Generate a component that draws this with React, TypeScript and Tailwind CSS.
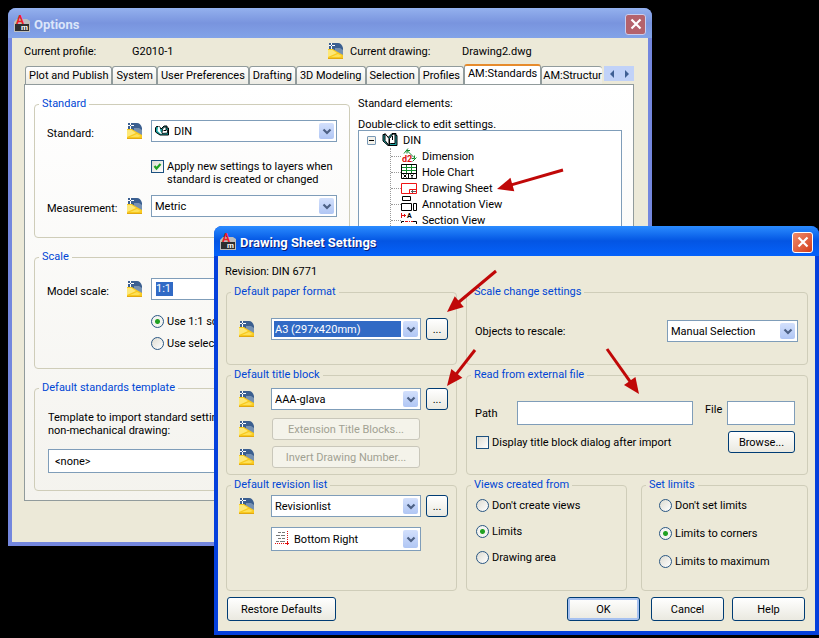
import { useId, useState } from 'react';
import type { ReactNode } from 'react';
import clsx from 'clsx';

const TABS = ['Plot and Publish', 'System', 'User Preferences', 'Drafting', '3D Modeling', 'Selection', 'Profiles', 'AM:Standards', 'AM:Structur'];

/* ---------- icons ---------- */

function DrawingIcon({ className = '' }: { className?: string }) {
  return (
    <svg viewBox="0 0 16 16" className={clsx('size-4 shrink-0', className)} aria-hidden="true">
      <path d="M1 0h9q3.500 0 5 5v8H1z" fill="#3b5f90" />
      <path d="M7 5h5l3 2v6L7 9z" fill="#7691b2" />
      <path d="M0 6h5l3 2 7 4v4H0z" fill="#f8c91e" />
      <path d="M0 7h4.500l4.500 3-9 4z" fill="#fde878" />
      <path d="M3 14l7-3 4 2-3 1z" fill="#fde05a" />
      <path d="M0 15h15v1H0z" fill="#e2a812" />
      <path d="M3.500 0v6M1 2.500h6" stroke="#fff" />
      <path d="M3 2h1v1H3z" fill="#3b5f90" />
    </svg>
  );
}

function AppIcon() {
  return (
    <svg viewBox="0 0 16 16" className="size-4 shrink-0 overflow-visible" aria-hidden="true">
      <path d="M0 6l3-3h10l3 2v11H0z" fill="#bdbdbd" />
      <path d="M1 8h14v7H1z" fill="#2e2e2e" />
      <text x="2" y="8" fontSize="12" fontWeight="700" fill="#ee1c24">A</text>
      <text x="7" y="14" fontSize="8" fontWeight="700" fill="#fff">m</text>
    </svg>
  );
}

function BookIcon() {
  return (
    <svg viewBox="0 0 16 16" className="size-4 shrink-0" aria-hidden="true">
      <path d="M1 2.500h2l3 3 4-4h4v2h1v10H6L1 9z" fill="#1aa0a0" stroke="#000" />
      <path d="M3 1.500l4 5v7L3 8.500z" fill="#fff" stroke="#000" />
      <path d="M7.500 12.500v-6L11 2h2v9.500H8.500z" fill="#fff" stroke="#000" />
      <path d="M10.500 4v4" fill="none" stroke="#000" />
    </svg>
  );
}

function OpenBookIcon() {
  return (
    <svg viewBox="0 0 16 12" className="h-3 w-4 shrink-0" aria-hidden="true">
      <path d="M1.500 1.500h3L6 4l3-3h3v2h1.500v7H5L.5 7V3z" fill="#16a3a3" stroke="#000" />
      <path d="M3 1.500h1.500l1 5 2 2.500H6L2.500 6z" fill="#fff" />
      <path d="M7 8.500L7.500 4l2-2h1.500v3h1.500v3z" fill="#fff" stroke="#000" strokeWidth=".8" />
      <path d="M8.500 5.500h2.500" stroke="#000" />
    </svg>
  );
}

function DimensionIcon() {
  return (
    <svg viewBox="0 0 16 16" className="size-4 shrink-0" aria-hidden="true">
      <path d="M6 2.500l7 7M6 2.500h3M6 2.500v3M13.500 10.500v-3M13.500 10.500h-3M3 5.500l4-5M11.500 13.500l4-4" fill="none" stroke="#128a2c" />
      <text x="1" y="14" fontSize="9" fontWeight="700" fill="#e01010">d2</text>
    </svg>
  );
}

function HoleChartIcon() {
  return (
    <svg viewBox="0 0 16 16" className="size-4 shrink-0" aria-hidden="true">
      <path d="M.5.5h15v14H.5z" fill="#fff" />
      <path d="M1 3.500h14M1 6.500h14M5.500 1v8M10.500 1v8" stroke="#128a2c" />
      <path d="M.5.5h15v14H.5zM1 9.500h14M7.500 9v6" fill="none" stroke="#000" />
      <path d="M2.500 10.500l3 3M5.500 10.500l-3 3M9.500 10.500l1.500 1.500 1.500-1.500M11 12v2" fill="none" stroke="#000" />
    </svg>
  );
}

function SheetIcon() {
  return (
    <svg viewBox="0 0 16 16" className="size-4 shrink-0" aria-hidden="true">
      <path d="M.5 3.500h15v10H.5z" fill="#fff" stroke="#f01414" />
      <path d="M8.500 13.500v-4h7" fill="none" stroke="#f01414" />
      <path d="M10 11.500h5M11.500 10v3" stroke="#5b5b5b" />
    </svg>
  );
}

function AnnotationIcon() {
  return (
    <svg viewBox="0 0 16 16" className="size-4 shrink-0" aria-hidden="true">
      <path d="M1.500.5h8v4h-8zM.5 7.500h10v7H.5zM12.500 7.500h3v7h-3z" fill="#fff" stroke="#000" />
    </svg>
  );
}

function SectionIcon() {
  return (
    <svg viewBox="0 0 16 16" className="size-4 shrink-0" aria-hidden="true">
      <path d="M.5 1v5M1 3.500h4M3.500 2v3M4 9.500h3M8 9.500h1M10 9.500h3" stroke="#e01010" fill="none" />
      <path d="M.5 11V9.500H3M12 9.500h3.500V12" fill="none" stroke="#000" />
      <text x="6" y="6" fontSize="7" fontWeight="700">A</text>
    </svg>
  );
}

function AlignIcon() {
  return (
    <svg viewBox="0 0 16 16" className="size-4 shrink-0" aria-hidden="true">
      <path d="M3 1.500h3M7 1.500h3M1 4.500h4M6 4.500h4M3 7.500h3M7 7.500h3M1 10.500h3M5 10.500h5" stroke="#777" />
      <path d="M12.500 0v12M0 12.500h12" stroke="#e01010" strokeDasharray="1 1" />
      <path d="M12.500 11v3M11 12.500h3" stroke="#e01010" />
    </svg>
  );
}

function Chevron() {
  return (
    <svg viewBox="0 0 10 7" className="w-[10px]" aria-hidden="true">
      <path d="M1.500 1.500L5 5l3.500-3.500" fill="none" stroke="#4d6185" strokeWidth="2.200" />
    </svg>
  );
}

/* ---------- controls ---------- */

type SelectProps = { label: string; value: string; icon?: ReactNode; highlight?: boolean; tall?: boolean; id?: string };

function SelectBox({ label, value, icon, highlight, tall, id }: SelectProps) {
  return (
    <div className={clsx('flex min-w-0 items-stretch gap-[2px] border border-[#7f9db9] bg-white p-[2px]', tall ? 'h-6' : 'h-[22px]')}>
      {icon && <span className="flex items-center pl-px">{icon}</span>}
      <select
        id={id}
        aria-label={label}
        className={clsx('min-w-0 flex-1 appearance-none pl-px outline-none', highlight ? 'bg-[#316ac5] text-white' : 'bg-white')}
      >
        <option>{value}</option>
      </select>
      <span className="flex w-[15px] items-center justify-center rounded-xs bg-linear-to-b from-[#d3e0fc] to-[#b0c6f4]">
        <Chevron />
      </span>
    </div>
  );
}

function XpButton({ children, className, disabled, primary }: { children: ReactNode; className?: string; disabled?: boolean; primary?: boolean }) {
  return (
    <button
      type="button"
      disabled={disabled}
      className={clsx(
        'rounded-[3px] border text-center whitespace-nowrap',
        disabled
          ? 'border-[#c9c7ba] bg-[#f4f3ea] text-[#a1a192]'
          : 'border-[#003c74] bg-linear-to-b from-white to-[#eae9e0]',
        primary && 'inset-ring-2 inset-ring-[#a6c1f0]',
        className
      )}
    >
      {children}
    </button>
  );
}

function Radio({ name, label, checked }: { name: string; label: string; checked?: boolean }) {
  return (
    <label className="flex items-center gap-[3px] whitespace-nowrap">
      <input
        type="radio"
        name={name}
        defaultChecked={checked}
        className="size-[13px] shrink-0 appearance-none rounded-full border border-[#2a5783] bg-linear-to-br from-[#dedcd2] to-white checked:bg-[radial-gradient(circle,#21a121_0_2px,#f4f4f0_3px)]"
      />
      {label}
    </label>
  );
}

function CheckBox({ label, checked }: { label: ReactNode; checked?: boolean }) {
  return (
    <label className="flex items-start gap-[3px]">
      <span className="relative size-[13px] shrink-0">
        <input
          type="checkbox"
          defaultChecked={checked}
          className="peer block size-[13px] appearance-none border border-[#1c5180] bg-linear-to-br from-[#dedcd2] to-white"
        />
        <svg viewBox="0 0 13 13" className="pointer-events-none absolute inset-0 hidden peer-checked:block" aria-hidden="true">
          <path d="M3.500 6l2 2.500 4-4.500" fill="none" stroke="#21a121" strokeWidth="2.200" />
        </svg>
      </span>
      <span>{label}</span>
    </label>
  );
}

function Group({ title, className, children }: { title: string; className?: string; children: ReactNode }) {
  return (
    <fieldset className="min-w-0 rounded-[4px] border border-[#cfcdb9]">
      <legend className="ml-1 px-[3px] leading-[14px] text-[#0046d5]">{title}</legend>
      <div className={className}>{children}</div>
    </fieldset>
  );
}

function CloseButton({ faded }: { faded?: boolean }) {
  return (
    <button
      type="button"
      aria-label="Close"
      className={clsx(
        'flex size-[21px] items-center justify-center rounded-[3px] border',
        faded ? 'border-[#c9cdee] bg-[#b4626c]' : 'border-white bg-linear-to-br from-[#ee8a6a] to-[#d33a12]'
      )}
    >
      <svg viewBox="0 0 12 12" className="size-3" aria-hidden="true">
        <path d="M1.500 1.500l9 9M10.500 1.500l-9 9" stroke="#fff" strokeWidth="2.200" />
      </svg>
    </button>
  );
}

/* red pointer running from the tail to the tip, both in local pixels */
function Arrow({ className, tail, tip }: { className: string; tail: [number, number]; tip: [number, number] }) {
  const dx = tip[0] - tail[0];
  const dy = tip[1] - tail[1];
  const len = Math.hypot(dx, dy);
  const angle = (Math.atan2(dy, dx) * 180) / Math.PI;
  return (
    <svg className={clsx('pointer-events-none absolute overflow-visible', className)} aria-hidden="true">
      <g transform={`translate(${tail[0]} ${tail[1]}) rotate(${angle})`} fill="#c00808">
        <path d={`M0-1.500H${len - 14}V1.500H0z`} />
        <path d={`M${len} 0l-16-7v14z`} />
      </g>
    </svg>
  );
}

/* ---------- options window ---------- */

const ELEMENTS = [
  { name: 'Dimension', icon: <DimensionIcon /> },
  { name: 'Hole Chart', icon: <HoleChartIcon /> },
  { name: 'Drawing Sheet', icon: <SheetIcon /> },
  { name: 'Annotation View', icon: <AnnotationIcon /> },
  { name: 'Section View', icon: <SectionIcon /> },
];

function TabStrip() {
  const [active, setActive] = useState('AM:Standards');
  return (
    <div className="flex h-5 items-end">
      <div className="flex min-w-0 flex-1 items-end overflow-hidden pl-px" role="tablist">
        {TABS.map((tab) => (
          <button
            key={tab}
            type="button"
            role="tab"
            aria-selected={tab === active}
            onClick={() => setActive(tab)}
            className={clsx(
              'shrink-0 rounded-t-[3px] border border-b-0 border-[#919b9c] whitespace-nowrap last:border-r-0 last:pr-0 last:pl-px',
              tab === active
                ? 'h-5 border-t-2 border-t-[#e68b2c] bg-white px-[3px] pb-[3px]'
                : 'h-[18px] bg-linear-to-b from-white to-[#ecebe4] px-[3px]'
            )}
          >
            {tab}
          </button>
        ))}
      </div>
      <div className="mb-[3px] flex h-[15px] bg-[#c1d2f8]">
        <button type="button" aria-label="Scroll tabs left" className="flex w-[15px] items-center justify-center">
          <svg viewBox="0 0 6 8" className="h-2"><path d="M5 0v8L1 4z" fill="#3f5f93" /></svg>
        </button>
        <button type="button" aria-label="Scroll tabs right" className="flex w-[15px] items-center justify-center">
          <svg viewBox="0 0 6 8" className="h-2"><path d="M1 0v8l4-4z" fill="#3f5f93" /></svg>
        </button>
      </div>
    </div>
  );
}

function OptionsWindow() {
  const id = useId();
  return (
    <section className="absolute top-2 right-[167px] left-2 rounded-t-lg bg-[#7487de] px-1 pb-1">
      <header className="-mx-1 flex h-[30px] items-center gap-1 rounded-t-lg bg-linear-to-b from-[#94b1ee] via-[#7994de] to-[#82a3e8] px-[6px] pt-[2px]">
        <AppIcon />
        <h1 className="flex-1 pt-px text-[13px] font-bold text-[#dbe5fa]">Options</h1>
        <CloseButton faded />
      </header>
      <div className="bg-[#ece9d8] px-3 pr-[14px] pb-[41px]">
        <div className="flex h-[26px] items-center">
          <span className="w-[108px]">Current profile:</span>
          <span className="w-[196px]">G2010-1</span>
          <DrawingIcon />
          <span className="ml-[6px] w-[112px]">Current drawing:</span>
          <span>Drawing2.dwg</span>
        </div>
        <TabStrip />
        <div className="grid grid-cols-[316px_1fr] gap-2 border border-[#919b9c] bg-linear-to-b from-white to-[#f4f3ee] pt-3 pr-[11px] pb-[9px] pl-[9px]">
          <div className="flex flex-col gap-3">
            <Group title="Standard" className="px-3 pb-5">
              <div className="flex items-center pt-[9px]">
                <label htmlFor={id + 's'} className="w-20 pt-1">Standard:</label>
                <DrawingIcon />
                <div className="ml-2 flex-1">
                  <SelectBox id={id + 's'} label="Standard" value="DIN" icon={<OpenBookIcon />} />
                </div>
              </div>
              <div className="pt-[18px] pb-[9px] pl-[104px]">
                <CheckBox checked label={<>Apply new settings to layers when<br />standard is created or changed</>} />
              </div>
              <div className="flex items-center">
                <label htmlFor={id + 'm'} className="w-20 pt-1">Measurement:</label>
                <DrawingIcon />
                <div className="ml-2 flex-1">
                  <SelectBox id={id + 'm'} label="Measurement" value="Metric" />
                </div>
              </div>
            </Group>
            <Group title="Scale" className="px-3 pb-[18px]">
              <div className="flex items-center pt-[14px]">
                <label htmlFor={id + 'sc'} className="w-20 pt-1">Model scale:</label>
                <DrawingIcon />
                <div className="ml-2 flex h-[22px] flex-1 items-center border border-[#7f9db9] bg-white px-1">
                  <input id={id + 'sc'} defaultValue="1:1" size={1} className="w-[17px] bg-[#316ac5] leading-[14px] text-white outline-none" />
                </div>
              </div>
              <div className="flex flex-col gap-[9px] pt-[15px] pl-[104px]">
                <Radio name="scale" label="Use 1:1 scale for drawings" checked />
                <Radio name="scale" label="Use selected scale" />
              </div>
            </Group>
            <Group title="Default standards template" className="px-[13px] pb-[17px]">
              <label htmlFor={id + 't'} className="block pt-4">
                Template to import standard settings from into<br />non-mechanical drawing:
              </label>
              <input id={id + 't'} defaultValue="<none>" className="mt-3 block h-6 w-full border border-[#7f9db9] bg-white px-[6px] outline-none" />
            </Group>
          </div>
          <div className="flex flex-col">
            <p>Standard elements:</p>
            <p className="pt-[9px] leading-[11px]">Double-click to edit settings.</p>
            <div className="flex-1 border border-[#7f9db9] bg-white pt-px pl-2">
              <div className="flex h-4 items-center">
                <button type="button" aria-label="Collapse DIN" className="flex size-[9px] items-center justify-center rounded-[1px] border border-[#7898b5] bg-[#f3f1ea]">
                  <span className="h-px w-[5px] bg-black" />
                </button>
                <span className="mr-[5px] ml-[6px]"><BookIcon /></span>
                DIN
              </div>
              <ul className="ml-[23px] border-l border-dotted border-[#9a9a9a] pb-4">
                {ELEMENTS.map((el) => (
                  <li key={el.name} className="flex h-4 items-center">
                    <span className="w-[10px] border-t border-dotted border-[#9a9a9a]" />
                    {el.icon}
                    <span className="ml-[5px]">{el.name}</span>
                  </li>
                ))}
              </ul>
            </div>
          </div>
        </div>
      </div>
    </section>
  );
}

/* ---------- drawing sheet dialog ---------- */

function SheetDialog() {
  const id = useId();
  return (
    <section role="dialog" aria-label="Drawing Sheet Settings" className="absolute top-[226px] right-0 left-[214px] rounded-t-lg bg-[#0540dc] px-1 pb-1">
      <header className="-mx-1 flex h-[30px] items-center gap-1 rounded-t-lg bg-linear-to-b from-[#2b8bff] via-[#0455e3] to-[#0562fa] px-[6px] pt-[2px]">
        <AppIcon />
        <h2 className="flex-1 pt-px text-[13px] font-bold text-white [text-shadow:1px_1px_#0a1f7a]">Drawing Sheet Settings</h2>
        <CloseButton />
      </header>
      <div className="bg-[#ece9d8] pt-[9px] pr-[7px] pb-[10px] pl-2">
        <p className="-ml-px pb-[7px]">Revision: DIN 6771</p>
        <div className="grid grid-cols-[231px_1fr] gap-x-[9px] gap-y-[3px]">
          <Group title="Default paper format" className="pr-2 pb-6 pl-3">
            <div className="flex items-center pt-[19px]">
              <DrawingIcon />
              <div className="ml-4 w-[150px]"><SelectBox label="Paper format" value="A3 (297x420mm)" highlight /></div>
              <XpButton className="ml-[5px] h-[22px] w-[22px]">...</XpButton>
            </div>
          </Group>
          <Group title="Scale change settings" className="pr-[9px] pb-5 pl-2">
            <div className="flex items-center pt-[21px]">
              <label htmlFor={id + 'r'} className="flex-1">Objects to rescale:</label>
              <div className="w-[131px]"><SelectBox id={id + 'r'} label="Objects to rescale" value="Manual Selection" /></div>
            </div>
          </Group>
          <Group title="Default title block" className="pr-2 pb-[6px] pl-3">
            <div className="flex items-center pt-[6px]">
              <DrawingIcon />
              <div className="ml-4 w-[150px]"><SelectBox label="Title block" value="AAA-glava" /></div>
              <XpButton className="ml-[5px] h-[22px] w-[22px]">...</XpButton>
            </div>
            <div className="flex items-center pt-2">
              <DrawingIcon />
              <XpButton disabled className="ml-[17px] h-[22px] w-[148px]">Extension Title Blocks...</XpButton>
            </div>
            <div className="flex items-center pt-[6px]">
              <DrawingIcon />
              <XpButton disabled className="ml-[17px] h-[22px] w-[148px]">Invert Drawing Number...</XpButton>
            </div>
          </Group>
          <Group title="Read from external file" className="pr-3 pb-5 pl-2">
            <div className="flex items-center pt-[19px]">
              <label htmlFor={id + 'p'} className="w-[42px]">Path</label>
              <input id={id + 'p'} className="h-6 min-w-0 flex-1 border border-[#7f9db9] bg-white px-1 outline-none" />
              <label htmlFor={id + 'f'} className="ml-3 w-[22px] pb-2">File</label>
              <input id={id + 'f'} className="h-6 w-[68px] border border-[#7f9db9] bg-white px-1 outline-none" />
            </div>
            <div className="flex items-center justify-between pt-[6px] pl-px">
              <CheckBox label="Display title block dialog after import" />
              <XpButton className="h-[22px] w-[67px]">Browse...</XpButton>
            </div>
          </Group>
          <Group title="Default revision list" className="pr-2 pb-[39px] pl-3">
            <div className="flex items-center pt-[3px]">
              <DrawingIcon />
              <div className="ml-4 w-[150px]"><SelectBox label="Revision list" value="Revisionlist" /></div>
              <XpButton className="ml-[5px] h-[22px] w-[22px]">...</XpButton>
            </div>
            <div className="mt-[10px] ml-8 w-[150px]">
              <SelectBox label="Revision list position" value="Bottom Right" icon={<AlignIcon />} tall />
            </div>
          </Group>
          <div className="grid grid-cols-[161px_1fr] gap-[14px]">
            <Group title="Views created from" className="pl-[9px]">
              <div className="flex flex-col gap-[13px] pt-[7px]">
                <Radio name="views" label="Don't create views" />
                <Radio name="views" label="Limits" checked />
                <Radio name="views" label="Drawing area" />
              </div>
            </Group>
            <Group title="Set limits" className="pl-[17px]">
              <div className="flex flex-col gap-[15px] pt-[7px]">
                <Radio name="limits" label="Don't set limits" />
                <Radio name="limits" label="Limits to corners" checked />
                <Radio name="limits" label="Limits to maximum" />
              </div>
            </Group>
          </div>
        </div>
        <footer className="flex items-center pt-[6px] pr-[3px] pl-px">
          <XpButton className="mr-auto h-6 w-[109px]">Restore Defaults</XpButton>
          <XpButton primary className="h-6 w-[73px]">OK</XpButton>
          <XpButton className="ml-[11px] h-6 w-[73px]">Cancel</XpButton>
          <XpButton className="ml-2 h-6 w-[73px]">Help</XpButton>
        </footer>
      </div>
    </section>
  );
}

export default function App() {
  return (
    <main className="relative min-h-screen overflow-hidden bg-black font-[Roboto,'Liberation_Sans',sans-serif] text-[11px] leading-[13px] text-black">
      <OptionsWindow />
      <SheetDialog />
      <Arrow className="top-[169px] left-[497px] h-5 w-[66px]" tail={[66, 1]} tip={[0, 20]} />
      <Arrow className="top-[271px] left-[447px] h-10 w-[49px]" tail={[49, 0]} tip={[0, 41]} />
      <Arrow className="top-[350px] left-[447px] h-9 w-7" tail={[28, 0]} tip={[0, 36]} />
      <Arrow className="top-[349px] left-[607px] h-11 w-8" tail={[0, 0]} tip={[32, 45]} />
    </main>
  );
}
